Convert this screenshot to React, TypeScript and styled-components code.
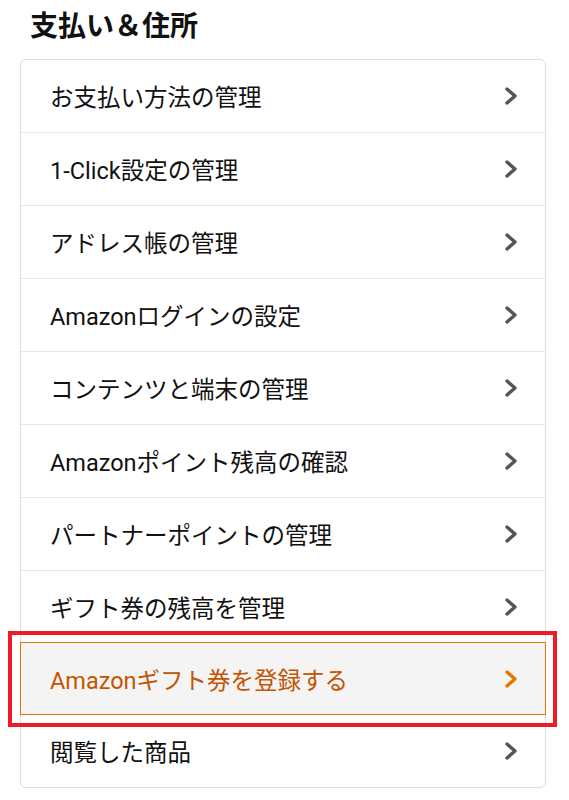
import React from "react";
import styled, { createGlobalStyle } from "styled-components";

const Global = createGlobalStyle`
  html, body { margin: 0; padding: 0; background: #fff; }
  body { font-family: Roboto, "Noto Sans CJK JP", sans-serif; color: #111; }
`;

const Page = styled.div`
  padding: 8px 0 12px 20px;
  width: 526px;
`;

const Title = styled.h2`
  margin: 0 0 0 10px;
  font-size: 28px;
  line-height: 38px;
  font-weight: 700;
  color: #111;
`;

const Card = styled.div`
  margin-top: 13px;
  border: 1px solid #dddddd;
  border-radius: 6px;
  background: #fff;
`;

const Row = styled.div<{ $active?: boolean }>`
  position: relative;
  display: flex;
  align-items: center;
  justify-content: space-between;
  height: 72px;
  padding: 0 26px 0 29px;
  border-top: 1px solid ${(p) => (p.$active ? "#e77600" : "#e7e7e7")};
  background: ${(p) => (p.$active ? "#f4f4f4" : "transparent")};
  color: ${(p) => (p.$active ? "#c45500" : "#111")};
  font-size: 23.5px;
  &:first-child { border-top: none; }
  ${(p) =>
    p.$active
      ? `
    margin: -1px -1px 0 -1px;
    height: 71px;
    border: 1px solid #e77600;
    padding-left: 29px;
    padding-right: 26px;
    z-index: 1;
    & + div { border-top: none; }
    &::after {
      content: "";
      position: absolute;
      left: -13px;
      right: -12px;
      top: -12px;
      bottom: -13px;
      border: 4px solid #ed1c24;
      pointer-events: none;
    }
  `
      : ""}
`;

const Label = styled.span`
  letter-spacing: 0;
`;

const Chevron = ({ color }: { color: string }) => (
  <svg width="16" height="20" viewBox="0 0 16 20">
    <path d="M4 3 L12 10 L4 17" fill="none" stroke={color} strokeWidth="3.4" strokeLinecap="round" strokeLinejoin="round" />
  </svg>
);

const items = [
  "お支払い方法の管理",
  "1-Click設定の管理",
  "アドレス帳の管理",
  "Amazonログインの設定",
  "コンテンツと端末の管理",
  "Amazonポイント残高の確認",
  "パートナーポイントの管理",
  "ギフト券の残高を管理",
  "Amazonギフト券を登録する",
  "閲覧した商品",
];

export default function App() {
  return (
    <>
      <Global />
      <Page>
        <Title>支払い＆住所</Title>
        <Card>
          {items.map((t, i) => {
            const active = i === 8;
            return (
              <Row key={t} $active={active}>
                <Label>{t}</Label>
                <Chevron color={active ? "#e77600" : "#555"} />
              </Row>
            );
          })}
        </Card>
      </Page>
    </>
  );
}
